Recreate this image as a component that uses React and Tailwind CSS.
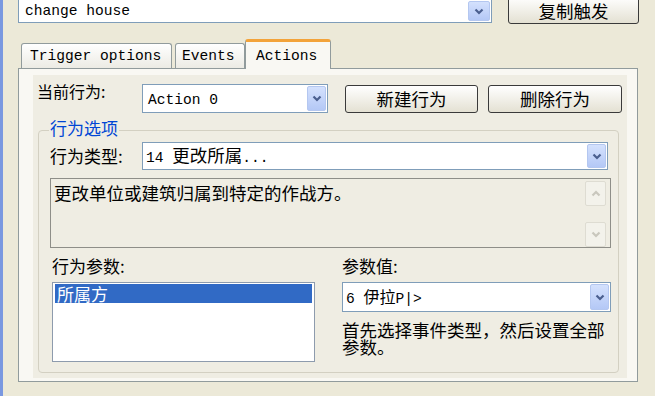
import React from 'react';

const MONO = "font-['Liberation_Mono','Noto_Sans_CJK_SC',monospace]";
const CJK = "font-['Noto_Sans_CJK_SC',sans-serif]";

const Chevron = ({ className = 'text-[#4a5f8f]' }) => (
  <svg width="10" height="7" viewBox="0 0 10 7" className={className}>
    <path d="M1.5 1.5 L5 5 L8.5 1.5" fill="none" stroke="currentColor" strokeWidth="2.2" />
  </svg>
);

const DropBtn = () => (
  <div className="w-[19px] rounded-[2px] border border-[#b4c7f0] bg-linear-to-b from-[#d4e1fd] to-[#b4c8f6] flex items-center justify-center">
    <Chevron />
  </div>
);

// combo box shell, width/height given by caller
const Combo = ({ className, children }) => (
  <div className={`bg-white border border-[#7f9db9] flex items-stretch p-[1px] ${className}`}>
    <div className="flex-1 flex items-center">
      <span className="leading-none whitespace-pre">{children}</span>
    </div>
    <DropBtn />
  </div>
);

const XpButton = ({ className, children }) => (
  <button className={`rounded-[3px] border border-[#3a3a3a] bg-linear-to-b from-white to-[#e4e1d3] flex items-center justify-center text-[17.5px] text-black ${CJK} ${className}`}>
    {children}
  </button>
);

const ScrollBtn = ({ up }) => (
  <div className="h-[25px] rounded-[2px] border border-[#dedcd2] bg-[#f3f2eb] flex items-center justify-center">
    <Chevron className={`text-[#c9c7bd] ${up ? 'rotate-180' : ''}`} />
  </div>
);

export default function App() {
  return (
    <div className={`w-[655px] h-[396px] overflow-hidden bg-[#ece9d8] border-l-[3px] border-[#7a98e0] flex flex-col text-black ${CJK}`}>
      {/* trigger name + copy */}
      <div className="flex items-start pl-[15px] mt-[-4px]">
        <div className="w-[474px] h-[27px] bg-white border border-[#7f9db9] flex items-stretch pl-[6px] pr-[1px] pt-[4px] pb-[1px]">
          <div className={`flex-1 flex items-center text-[14.6px] leading-none ${MONO}`}>change house</div>
          <div className="w-[22px] rounded-[2px] border border-[#b4c7f0] bg-linear-to-b from-[#d4e1fd] to-[#b4c8f6] flex items-center justify-center">
            <Chevron />
          </div>
        </div>
        <XpButton className="ml-[16px] w-[131px] h-[28px] pt-[2px]">复制触发</XpButton>
      </div>

      {/* tabs */}
      <div className={`flex items-end ml-[18px] mt-[15px] h-[29px] text-[14.6px] ${MONO}`}>
        <div className="w-[151px] h-[25px] border border-b-0 border-[#919b9c] rounded-t-[3px] bg-linear-to-b from-white to-[#ecebe4] flex items-center pl-[8px] pt-[1px]">
          Trigger options
        </div>
        <div className="ml-[3px] w-[70px] h-[25px] border border-b-0 border-[#919b9c] rounded-t-[3px] bg-linear-to-b from-white to-[#ecebe4] flex items-center pl-[6px] pt-[1px]">
          Events
        </div>
        <div className="relative z-10 mb-[-1px] w-[86px] h-[30px] border border-b-0 border-[#919b9c] border-t-[3px] border-t-[#f3a33a] rounded-t-[3px] bg-[#f9f8f3] flex items-start pl-[10px] pt-[4px]">
          Actions
        </div>
      </div>

      {/* tab page */}
      <div className="ml-[15px] w-[620px] h-[314px] border border-[#919b9c] bg-[#f9f8f3]">
        <div className="mt-[6px] ml-[14px] w-[594px] h-[303px] bg-[#efede3] flex flex-col">
          {/* current action */}
          <div className="mt-[6px] flex items-start pl-[4px]">
            <div className="w-[105px] text-[16px] leading-[20px]">当前行为:</div>
            <Combo className="mt-[3px] w-[186px] h-[29px]">
              <span className={`pl-[4px] text-[14.6px] ${MONO}`}>Action 0</span>
            </Combo>
            <XpButton className="ml-[17px] mt-[4px] w-[133px] h-[28px]">新建行为</XpButton>
            <XpButton className="ml-[10px] mt-[4px] w-[134px] h-[28px]">删除行为</XpButton>
          </div>

          {/* action options group */}
          <div className="mt-[17px] ml-[5px] w-[581px] h-[243px] border border-[#d3d0c2] rounded-[4px] flex flex-col">
            <div className="-mt-[12px] ml-[10px] w-fit px-[1px] bg-[#efede3] text-[17px] leading-[18px] text-[#0046d5]">行为选项</div>

            <div className="mt-[5px] flex items-center pl-[11px]">
              <div className="w-[92px] text-[17px] leading-[20px]">行为类型:</div>
              <Combo className="w-[466px] h-[28px]">
                <span className={`pl-[2px] text-[14.6px] ${MONO}`}>{'14 '}</span>
                <span className="text-[17.5px]">更改所属</span>
                <span className={`text-[14.6px] ${MONO}`}>...</span>
              </Combo>
            </div>

            <div className="mt-[8px] ml-[11px] w-[561px] h-[70px] border border-[#8e8e88] flex">
              <div className="flex-1 pl-[3px] pt-[3px] text-[17.5px] leading-[22px]">更改单位或建筑归属到特定的作战方。</div>
              <div className="w-[21px] mr-[4px] pt-[2px] flex flex-col justify-between">
                <ScrollBtn up />
                <ScrollBtn />
              </div>
            </div>

            <div className="mt-[8px] flex pl-[13px]">
              <div className="w-[263px]">
                <div className="text-[17px] leading-[20px]">行为参数:</div>
                <div className="mt-[6px] h-[80px] border border-[#8d9bad] bg-white pt-[1px] px-[2px]">
                  <div className="h-[19px] bg-[#316ac5] text-white text-[17px] leading-[19px] pl-[2px]">所属方</div>
                </div>
              </div>
              <div className="ml-[27px] w-[269px]">
                <div className="text-[17px] leading-[20px]">参数值:</div>
                <Combo className="mt-[6px] h-[30px]">
                  <span className={`pl-[2px] text-[14.6px] ${MONO}`}>{'6 '}</span>
                  <span className="text-[16px]">伊拉</span>
                  <span className={`text-[14.6px] ${MONO}`}>P|&gt;</span>
                </Combo>
                <div className="mt-[9px] text-[17.5px] leading-[17px]">首先选择事件类型，然后设置全部参数。</div>
              </div>
            </div>
          </div>
        </div>
      </div>
    </div>
  );
}
